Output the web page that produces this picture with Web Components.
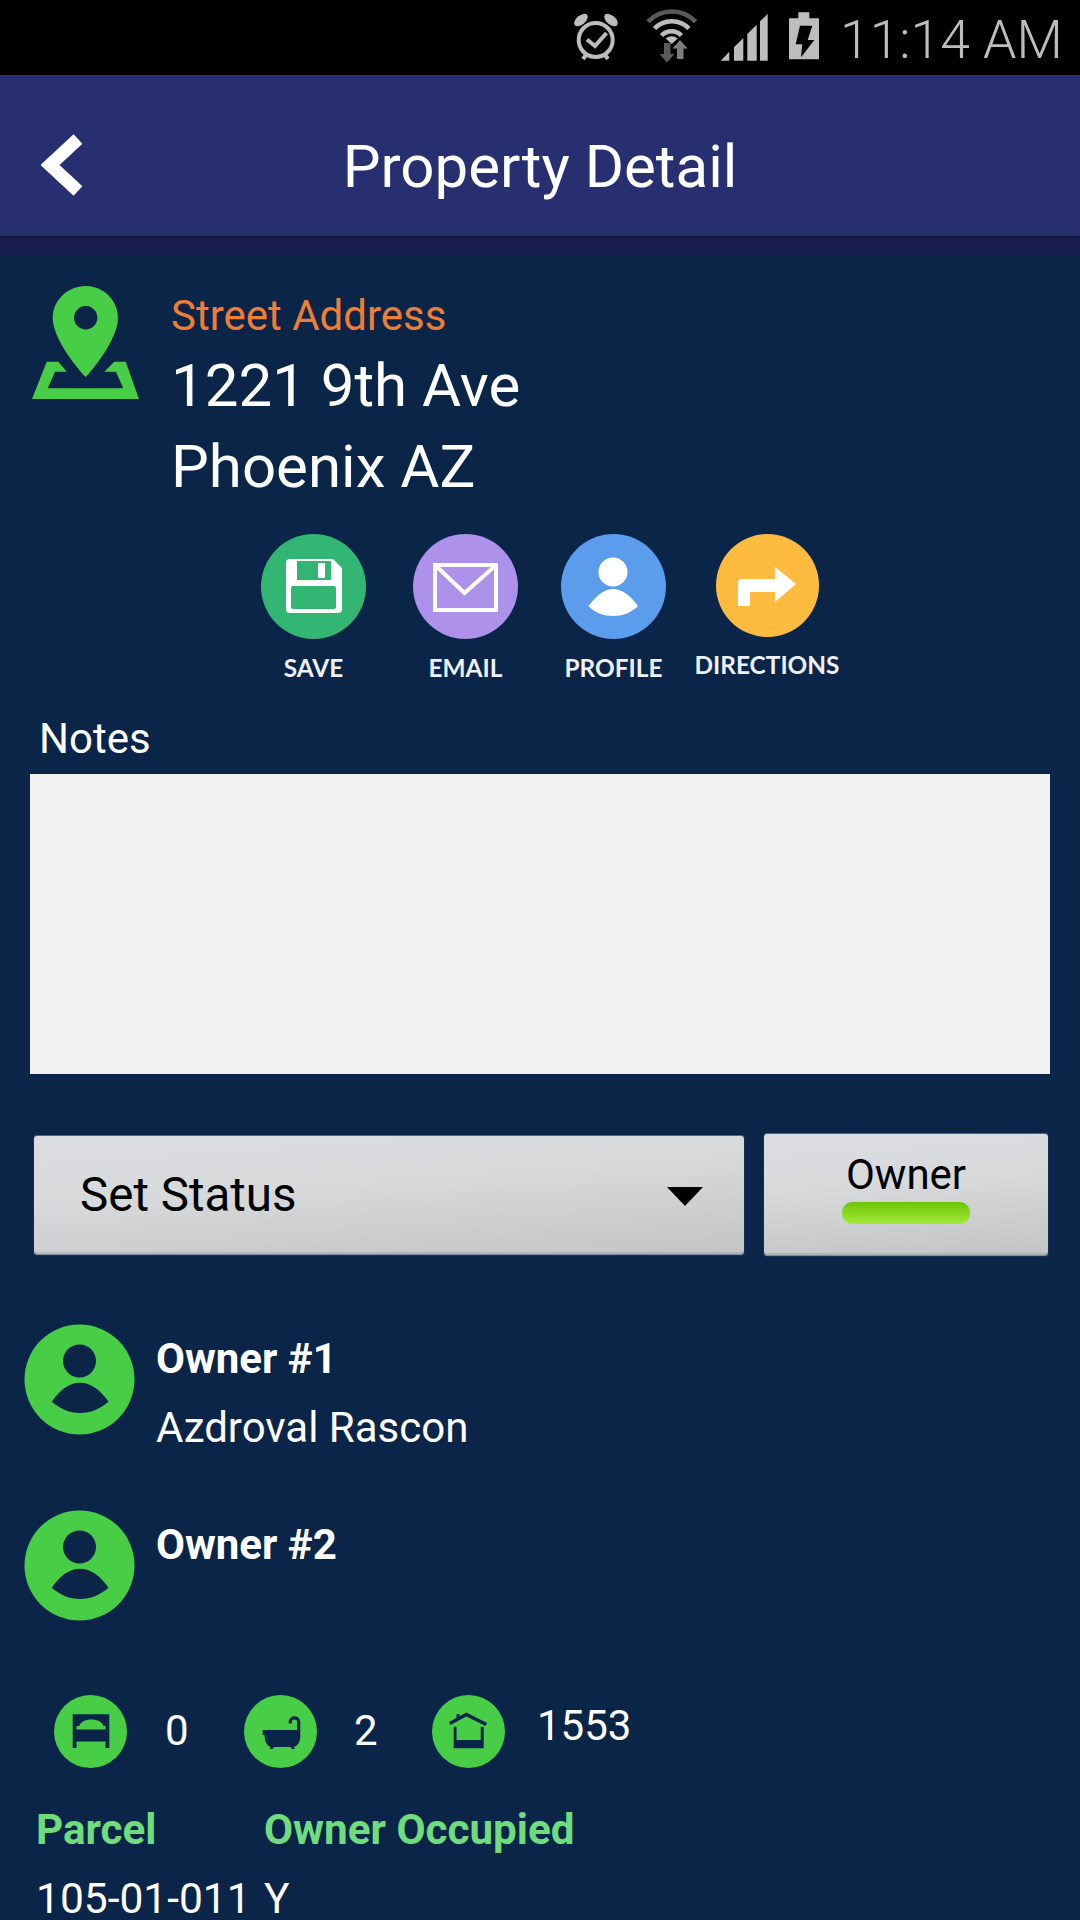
<!DOCTYPE html>
<html>
<head>
<meta charset="utf-8">
<title>Property Detail</title>
<style>
  html, body { margin: 0; padding: 0; background: #0b2549; }
  body { width: 1080px; height: 1920px; overflow: hidden; font-family: Roboto, "Liberation Sans", sans-serif; color: #fff; }
</style>
</head>
<body>
<status-bar></status-bar>
<app-header>Property Detail</app-header>
<address-block label="Street Address">
  <span>1221 9th Ave</span>
  <span>Phoenix AZ</span>
</address-block>
<action-row>
  <action-button label="SAVE" color="#33b573" icon="save" style="width:151px"></action-button>
  <action-button label="EMAIL" color="#ad91ea" icon="email" style="width:153px"></action-button>
  <action-button label="PROFILE" color="#5c9ced" icon="profile" style="width:143px"></action-button>
  <action-button label="DIRECTIONS" color="#fdbb3f" icon="directions" small style="width:164px"></action-button>
</action-row>
<notes-box>Notes</notes-box>
<status-controls></status-controls>
<owner-row title="Owner #1" name="Azdroval Rascon"></owner-row>
<owner-row title="Owner #2" class="second"></owner-row>
<stat-row></stat-row>
<detail-table></detail-table>

<script>
const ICONS = {
  save: `<svg viewBox="0 0 105 105" width="100%" height="100%">
    <path fill="#fff" d="M29 25h43l9 9v41a4 4 0 0 1-4 4H29a4 4 0 0 1-4-4V29a4 4 0 0 1 4-4z"/>
    <path fill="#33b573" d="M36 27h34v19H36z"/>
    <rect x="57" y="29" width="7" height="15" fill="#fff"/>
    <rect x="30" y="52" width="45" height="23" rx="2" fill="#33b573"/>
  </svg>`,
  email: `<svg viewBox="0 0 105 105" width="100%" height="100%">
    <rect x="22" y="31" width="61" height="45" fill="none" stroke="#fff" stroke-width="4"/>
    <path d="M23 32l28.500 27L82 32" fill="none" stroke="#fff" stroke-width="4"/>
  </svg>`,
  profile: `<svg viewBox="0 0 105 105" width="100%" height="100%">
    <circle cx="52" cy="38" r="14.500" fill="#fff"/>
    <path fill="#fff" d="M27.500 72C35 62 43 55 52 55s18 7 25 17c-7 7-16 10-25 10s-18-3-24.500-10z"/>
  </svg>`,
  directions: `<svg viewBox="0 0 103 103" width="100%" height="100%">
    <path fill="#fff" d="M22 72V49q0-4 4-4h33V33l21 17-21 18V58H34v14z"/>
  </svg>`
};

class StatusBar extends HTMLElement {
  constructor() {
    super();
    this.attachShadow({ mode: 'open' });
    this.shadowRoot.innerHTML = `
    <style>
      :host { display: flex; align-items: center; height: 75px; background: #000; color: #bdbdbd; box-sizing: border-box; padding-left: 572px; }
      svg { display: block; flex: none; }
      .time { font: 300 53.500px/75px Roboto, sans-serif; margin: 4px 0 0 18px; white-space: nowrap; }
    </style>
    <svg width="250" height="75" viewBox="572 0 250 75">
      <circle cx="595.700" cy="40" r="17" fill="none" stroke="#bdbdbd" stroke-width="4"/>
      <path d="M587 39.500l8 6.500 11.500-13" fill="none" stroke="#bdbdbd" stroke-width="4"/>
      <ellipse cx="581" cy="20" rx="8" ry="4.500" transform="rotate(-40 581 20)" fill="#bdbdbd"/>
      <ellipse cx="611" cy="20" rx="8" ry="4.500" transform="rotate(40 611 20)" fill="#bdbdbd"/>
      <path d="M586 55l-3 4M605 55l3 4" stroke="#bdbdbd" stroke-width="4"/>

      <path d="M648 21.700a33 33 0 0 1 47.700 0" fill="none" stroke="#5a5a5a" stroke-width="4.500"/>
      <path d="M654.500 28.500a24 24 0 0 1 34.500 0" fill="none" stroke="#bdbdbd" stroke-width="4.500"/>
      <path d="M661.500 35.500a14 14 0 0 1 20 0" fill="none" stroke="#bdbdbd" stroke-width="4.500"/>
      <path d="M671.700 44l-6-5.500a9 9 0 0 1 12 0z" fill="#bdbdbd"/>
      <path d="M664 43h6.500v11h4l-7.500 8.500-7.500-8.500h4.500z" fill="#5a5a5a"/>
      <path d="M680 40l7.500 8.500h-4V59h-6.500V48.500h-4.500z" fill="#7d7d7d"/>

      <path d="M720.700 60.700l8.600-9v9zM734 47.300l9.300-9.300v22.700H734zM747.300 34l9.400-9.300v36h-9.400zM760 21.300l7.700-7.300v46.700H760z" fill="#bdbdbd"/>

      <path d="M798.300 12.300h11v6h9.700v41h-30v-41h9.300z" fill="#bdbdbd"/>
      <path d="M800 25.700h12.300L807.700 40h6.600L801 57.300l1.300-13h-6.600z" fill="#000"/>
    </svg>
    <span class="time">11:14 AM</span>`;
  }
}

class AppHeader extends HTMLElement {
  constructor() {
    super();
    this.attachShadow({ mode: 'open' });
    this.shadowRoot.innerHTML = `
    <style>
      :host { display: block; background: #191c4e; padding-bottom: 19px; }
      .bar { display: flex; align-items: center; justify-content: center; box-sizing: border-box; height: 161px; padding-top: 22px; background: #282f70; position: relative; font: 400 60px Roboto, sans-serif; color: #fff; box-shadow: 0 1px 2px rgba(0,0,0,.35); }
      svg { position: absolute; left: 41px; top: 59px; }
    </style>
    <div class="bar">
      <svg width="44" height="62" viewBox="0 0 44 62"><path d="M37 5L9 31l28 26" fill="none" stroke="#fff" stroke-width="13"/></svg>
      <slot></slot>
    </div>`;
  }
}

class AddressBlock extends HTMLElement {
  constructor() {
    super();
    this.attachShadow({ mode: 'open' });
    this.shadowRoot.innerHTML = `
    <style>
      :host { display: flex; padding: 31px 0 0 32px; }
      svg { flex: none; display: block; }
      .text { margin-left: 32px; display: flex; flex-direction: column; }
      .label { font-size: 42px; line-height: 59px; color: #ee7d36; }
      ::slotted(span) { font-size: 60px; line-height: 81px; color: #fff; }
    </style>
    <svg width="107" height="114" viewBox="0 0 107 114">
      <path fill="#47cd46" fill-rule="evenodd" d="M53.700 0C71.700 0 86 14.500 86 32 86 50 66 78 53.700 91 41 78 20.700 50 20.700 32 20.700 14.500 35.700 0 53.700 0zm0 20a11.700 11.700 0 1 0 0 23.400 11.700 11.700 0 0 0 0-23.400z"/>
      <path fill="#47cd46" d="M14.700 75.700h11.600l8.400 10H23l-7.300 16.600h75.600L84 85.700H72.300l10-10h11.400L107 113H0z"/>
    </svg>
    <div class="text">
      <div class="label">${this.getAttribute('label')}</div>
      <slot></slot>
    </div>`;
  }
}

class ActionRow extends HTMLElement {
  constructor() {
    super();
    this.attachShadow({ mode: 'open' });
    this.shadowRoot.innerHTML = `
    <style>
      :host { display: flex; padding: 27px 0 0 238px; }
    </style>
    <slot></slot>`;
  }
}

class ActionButton extends HTMLElement {
  constructor() {
    super();
    const size = this.hasAttribute('small') ? 103 : 105;
    this.attachShadow({ mode: 'open' });
    this.shadowRoot.innerHTML = `
    <style>
      :host { display: flex; flex-direction: column; align-items: center; }
      .circle { width: ${size}px; height: ${size}px; border-radius: 50%; background: ${this.getAttribute('color')}; }
      .label { margin-top: ${size === 103 ? 13 : 14}px; font: 700 24.400px/30px Lato, sans-serif; color: #eef1f5; white-space: nowrap; }
    </style>
    <div class="circle">${ICONS[this.getAttribute('icon')]}</div>
    <div class="label">${this.getAttribute('label')}</div>`;
  }
}

class NotesBox extends HTMLElement {
  constructor() {
    super();
    this.attachShadow({ mode: 'open' });
    this.shadowRoot.innerHTML = `
    <style>
      :host { display: block; padding: 31px 30px 0; }
      .label { font-size: 42px; line-height: 48px; padding: 1px 0 0 9px; margin-bottom: 11px; color: #fff; }
      .box { height: 300px; background: #f1f1f1; }
    </style>
    <div class="label"><slot></slot></div>
    <div class="box"></div>`;
  }
}

class StatusControls extends HTMLElement {
  constructor() {
    super();
    this.attachShadow({ mode: 'open' });
    this.shadowRoot.innerHTML = `
    <style>
      :host { display: flex; align-items: center; gap: 20px; height: 123px; margin: 59px 32px 0 34px; color: #000; }
      .select, .owner { box-sizing: border-box; background: linear-gradient(176deg, #dcdde0 0%, #d8d9db 40%, #c3c4c6 100%); box-shadow: 0 1px 1px #8d9bad, 0 -1px 0 #54657e, inset 0 -2px 1px rgba(0,0,0,.1); border-radius: 3px; }
      .select { flex: none; width: 710px; height: 118px; display: flex; align-items: center; justify-content: space-between; padding: 0 41px 0 46px; font-size: 47.500px; }
      .arrow { width: 0; height: 0; border-left: 18px solid transparent; border-right: 18px solid transparent; border-top: 19px solid #000; margin-top: 3px; }
      .owner { flex: none; width: 284px; height: 121px; display: flex; flex-direction: column; align-items: center; font-size: 42px; line-height: 48px; padding-top: 17px; }
      .pill { width: 128px; height: 22px; margin-top: 3px; border-radius: 10px; background: linear-gradient(#6fc406, #a3ea3b); }
    </style>
    <div class="select"><span>Set Status</span><div class="arrow"></div></div>
    <div class="owner"><span>Owner</span><div class="pill"></div></div>`;
  }
}

class OwnerRow extends HTMLElement {
  constructor() {
    super();
    const name = this.getAttribute('name') || '';
    this.attachShadow({ mode: 'open' });
    this.shadowRoot.innerHTML = `
    <style>
      :host { display: flex; height: 110px; padding: 68px 0 0 24px; font-size: 42px; }
      :host(.second) { padding-top: 76px; }
      svg { display: block; flex: none; }
      .text { margin-left: 21px; }
      .title { font-weight: 700; line-height: 56px; margin-top: 7px; color: #fff; }
      .name { line-height: 56px; margin-top: 13px; color: #fff; }
    </style>
    <svg width="111" height="111" viewBox="0 0 111 111">
      <circle cx="55.500" cy="55.500" r="55" fill="#47cd46"/>
      <circle cx="55.500" cy="37" r="16.500" fill="#0b2549"/>
      <path fill="#0b2549" d="M27.700 77.700C36 66 45 58.700 56 58.700s20 7.300 28.600 19C76 85 66 89 56 89s-20-4-28.300-11.300z"/>
    </svg>
    <div class="text">
      <div class="title">${this.getAttribute('title')}</div>
      <div class="name">${name}</div>
    </div>`;
  }
}

class StatRow extends HTMLElement {
  constructor() {
    super();
    this.attachShadow({ mode: 'open' });
    this.shadowRoot.innerHTML = `
    <style>
      :host { display: flex; padding: 75px 0 0 54px; font-size: 42px; line-height: 73px; color: #fff; height: 73px; }
      .circle { flex: none; width: 73px; height: 73px; border-radius: 50%; background: #47cd46; }
      svg { display: block; }
      .val { width: 117px; padding-left: 38px; box-sizing: border-box; margin-top: -1px; }
      .val.last { width: auto; margin-top: -6px; padding-left: 32px; }
    </style>
    <div class="circle"><svg width="73" height="73" viewBox="0 0 73 73">
      <path fill="#0b2549" d="M18.700 19.300h36.600V53h-3.800v-6h-29v6h-3.800z"/>
      <path fill="#47cd46" d="M25.300 31c.8-4 6-6.500 12-6.500s11.200 2.500 12 6.500z"/>
      <path fill="#47cd46" d="M22.500 31h29v3.500h-29z"/>
      <path fill="#47cd46" d="M22.500 46.500h29V48h-29z"/>
    </svg></div>
    <div class="val">0</div>
    <div class="circle"><svg width="73" height="73" viewBox="0 0 73 73">
      <path fill="#0b2549" d="M18.700 35h37.600v7c0 5-3 9-6.500 10l1.200 2h-3l-1.500-2H30l-1.500 2h-3l1.200-2c-4.200-1.500-6-6-6.200-12h-1.800z"/>
      <path d="M54.700 36V27c0-5.500-8.500-5.500-8.500 0v1.500" fill="none" stroke="#0b2549" stroke-width="3.200"/>
    </svg></div>
    <div class="val" style="width:115px;padding-left:37px">2</div>
    <div class="circle"><svg width="73" height="73" viewBox="0 0 73 73">
      <path d="M17.700 28.500l16.600-9 20 10" fill="none" stroke="#0b2549" stroke-width="3.500"/>
      <path d="M24.500 19h3v5h-3z" fill="#0b2549"/>
      <path d="M21.700 31.700h2.800V45h24.200V31.700h3v21.600h-30z" fill="#0b2549"/>
    </svg></div>
    <div class="val last">1553</div>`;
  }
}

class DetailTable extends HTMLElement {
  constructor() {
    super();
    this.attachShadow({ mode: 'open' });
    this.shadowRoot.innerHTML = `
    <style>
      :host { display: grid; grid-template-columns: 228px auto; justify-content: start; padding: 32px 0 0 36px; font-size: 42.500px; }
      .head { font-size: 42.200px; font-weight: 700; color: #6fdc7d; line-height: 60px; }
      .val { color: #fff; line-height: 68px; margin-top: 5px; white-space: nowrap; }
    </style>
    <div class="head">Parcel</div>
    <div class="head">Owner Occupied</div>
    <div class="val">105-01-011</div>
    <div class="val">Y</div>`;
  }
}

customElements.define('status-bar', StatusBar);
customElements.define('app-header', AppHeader);
customElements.define('address-block', AddressBlock);
customElements.define('action-row', ActionRow);
customElements.define('action-button', ActionButton);
customElements.define('notes-box', NotesBox);
customElements.define('status-controls', StatusControls);
customElements.define('owner-row', OwnerRow);
customElements.define('stat-row', StatRow);
customElements.define('detail-table', DetailTable);
</script>
</body>
</html>
